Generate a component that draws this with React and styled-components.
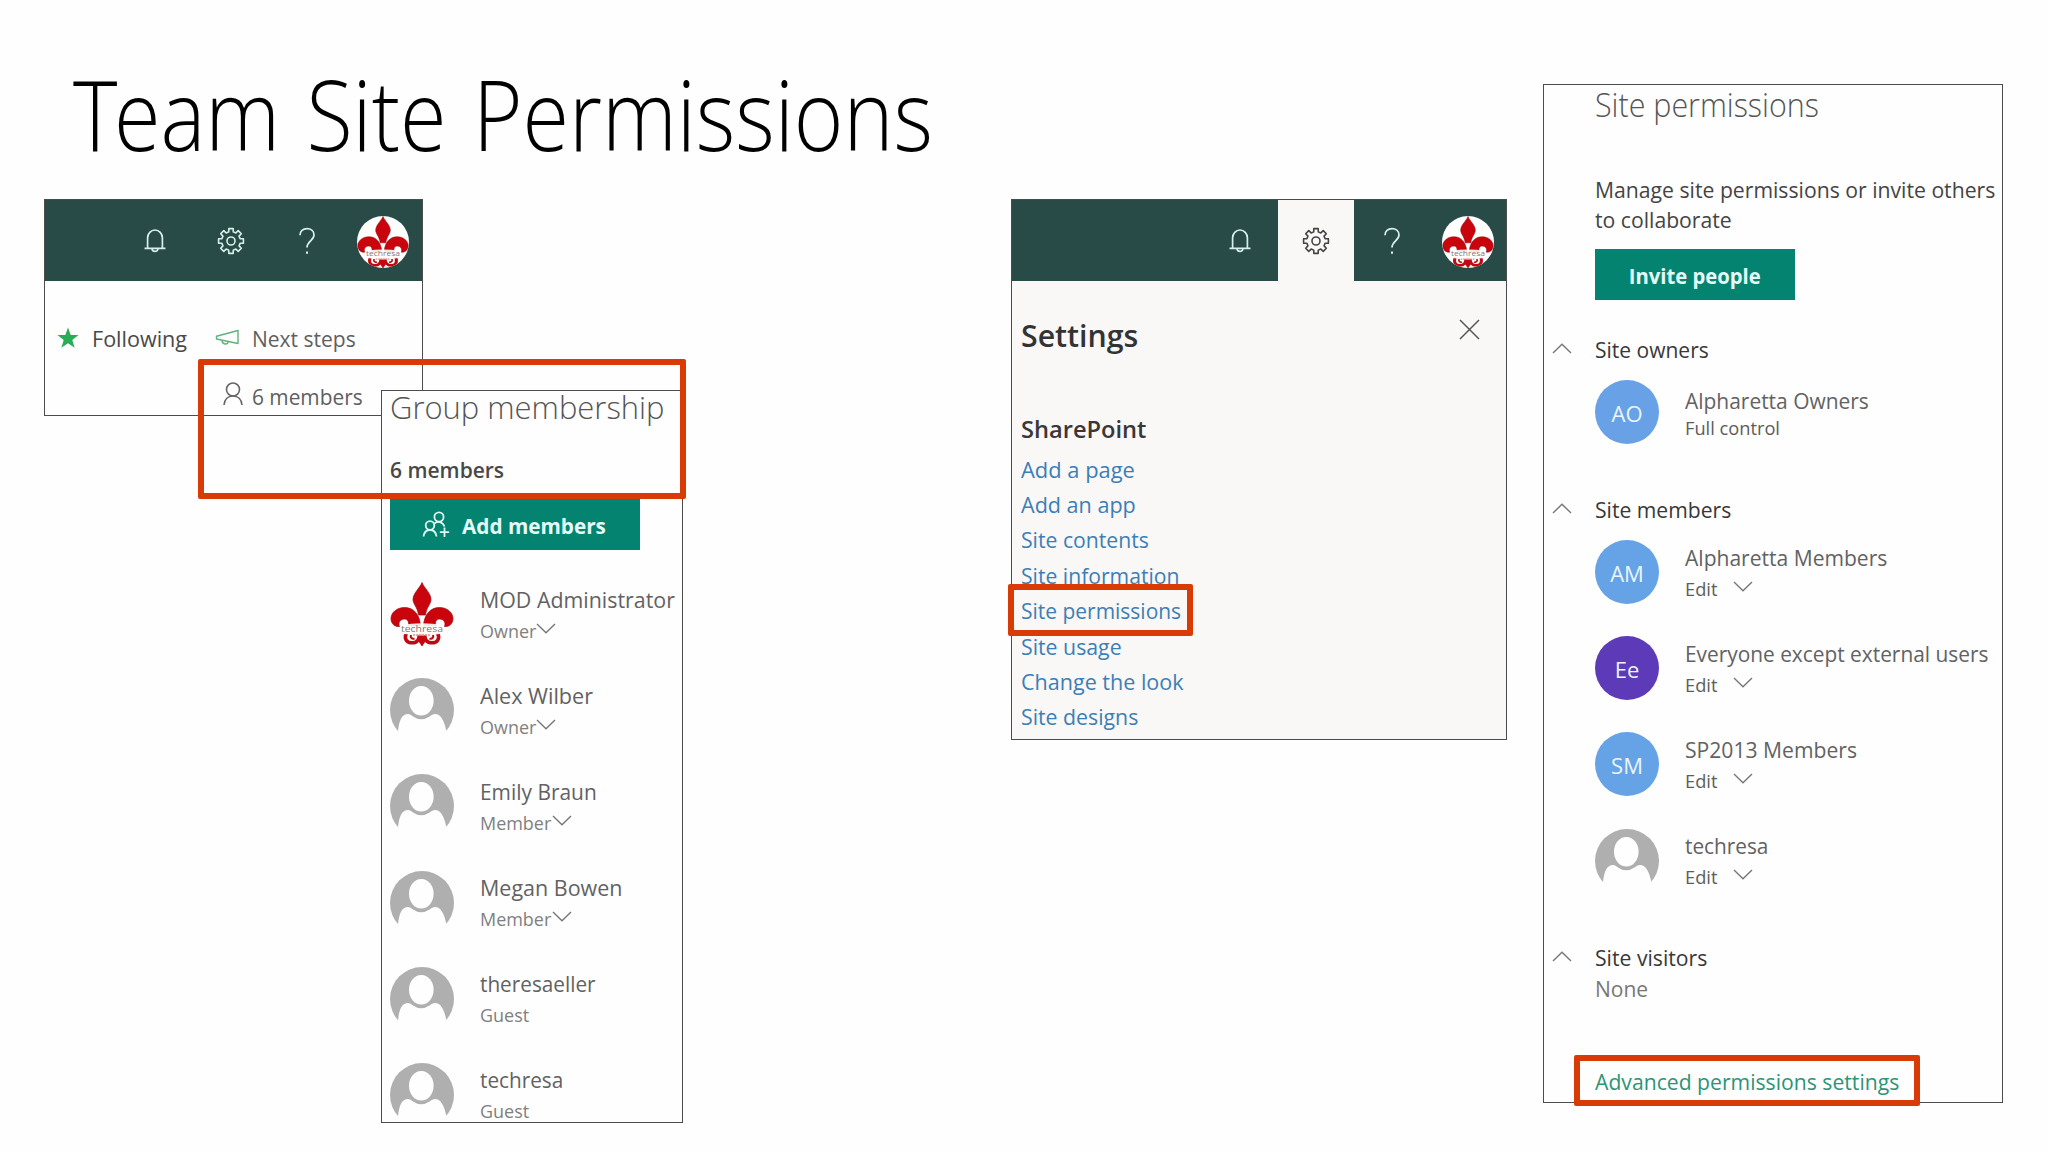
import React from 'react';
import styled, { createGlobalStyle } from 'styled-components';

const ownersGroup = [
  { initials: 'AO', color: '#69a1e6', name: 'Alpharetta Owners', fit: 0.952, role: 'Full control' },
];

const membersGroup = [
  { initials: 'AM', color: '#65a2e6', name: 'Alpharetta Members', fit: 0.957 },
  { initials: 'Ee', color: '#5c3ab8', name: 'Everyone except external users', fit: 0.948 },
  { initials: 'SM', color: '#65a2e6', name: 'SP2013 Members', fit: 0.96 },
  { name: 'techresa', fit: 0.945 },
];

const people = [
  { name: 'MOD Administrator', fit: 0.972, role: 'Owner', logo: true, menu: true },
  { name: 'Alex Wilber', fit: 0.98, role: 'Owner', menu: true },
  { name: 'Emily Braun', fit: 0.95, role: 'Member', menu: true },
  { name: 'Megan Bowen', fit: 0.977, role: 'Member', menu: true },
  { name: 'theresaeller', fit: 0.943, role: 'Guest' },
  { name: 'techresa', fit: 0.942, role: 'Guest' },
];

const links = [
  { text: 'Add a page', fit: 0.995 },
  { text: 'Add an app', fit: 0.98 },
  { text: 'Site contents', fit: 0.963 },
  { text: 'Site information', fit: 0.961 },
  { text: 'Site permissions', fit: 0.953 },
  { text: 'Site usage', fit: 0.967 },
  { text: 'Change the look', fit: 0.979 },
  { text: 'Site designs', fit: 0.967 },
];

function Bell() {
  return (
    <svg width="22" height="25" viewBox="0 0 22 25" fill="none" stroke="currentColor" strokeWidth="1.7">
      <path d="M3.6 20V10a7.4 8 0 0 1 14.8 0v10" />
      <path d="M0.5 20.4h21M8 20.6a3 2.8 0 0 0 6 0" />
    </svg>
  );
}

function Gear() {
  const points = [];
  for (let i = 0; i < 8; i++) {
    [[-14, 9.4], [-10, 12.6], [10, 12.6], [14, 9.4]].forEach(([deg, r]) => {
      const a = ((i * 45 + deg) * Math.PI) / 180;
      points.push(`${(14 + r * Math.sin(a)).toFixed(2)},${(14 - r * Math.cos(a)).toFixed(2)}`);
    });
  }
  return (
    <svg width="28" height="28" viewBox="0 0 28 28" fill="none" stroke="currentColor" strokeWidth="1.6" strokeLinejoin="round">
      <polygon points={points.join(' ')} />
      <circle cx="14" cy="14" r="4" />
    </svg>
  );
}

function Question() {
  return (
    <svg width="18" height="28" viewBox="0 0 18 28" fill="none" stroke="currentColor" strokeWidth="1.7">
      <path d="M2 8.2C2 4 5 1.6 9 1.6s7 2.4 7 6.4c0 5.4-7 6.6-7 12.4" />
      <path d="M9 24.4v2.4" strokeWidth="2" />
    </svg>
  );
}

function Fleur({ size = 64 }) {
  return (
    <svg width={size} height={size} viewBox="0 0 64 64">
      <g fill="#c9040c" stroke="#9d0a10" strokeWidth="0.7">
        <path d="M32 0.5C34 6 41 11 41 17.5C41 22 36.5 25 35.5 33H28.5C27.5 25 23 22 23 17.5C23 11 30 6 32 0.5Z" />
        <path d="M30.5 44C30 33 24 25.5 14.5 25.5C6.5 25.5 1 31 1 36.5C1 41.5 4.5 45 9.5 44.5C8 41 10 37 14.5 37C18 37 19 40 18.5 44Z" />
        <path d="M33.5 44C34 33 40 25.5 49.5 25.5C57.5 25.5 63 31 63 36.5C63 41.5 59.5 45 54.5 44.5C56 41 54 37 49.5 37C46 37 45 40 45.5 44Z" />
        <path d="M29 52H35L36 58L32 64L28 58Z" />
      </g>
      <g fill="none" stroke="#c00a12" strokeWidth="3.6">
        <path d="M16.5 51C13.5 57 17 60.8 22 60.8C27 60.8 30 57 29 52" />
        <path d="M47.5 51C50.5 57 47 60.8 42 60.8C37 60.8 34 57 35 52" />
        <path d="M21 52.5C20 55.5 22 57.5 24.5 56.5M43 52.5C44 55.5 42 57.5 39.5 56.5" strokeWidth="2" />
      </g>
      <path d="M11 43Q32 39.5 53 43V51.5Q32 55.5 11 51.5Z" fill="#fff" fillOpacity="0.9" />
      <text x="32" y="49.5" textAnchor="middle" textLength="42" lengthAdjust="spacingAndGlyphs" fontFamily="Open Sans, sans-serif" fontSize="9.5" fill="#8d7371">techresa</text>
      <path d="M23 53h18" stroke="#e88a8c" strokeWidth="1.6" strokeDasharray="2 1" />
    </svg>
  );
}

function Silhouette() {
  return (
    <svg width="64" height="54" viewBox="0 0 64 54">
      <circle cx="32" cy="32" r="32" fill="#b0afb0" />
      <ellipse cx="31.3" cy="22.7" rx="12.3" ry="14.8" fill="#fefefe" />
      <path d="M8 54C9 42 12 36 18 36C20 36 21 37 23 38.5Q31 44 39.5 38.5C41.5 37 43 36 45 36C51 36 54.5 43 56.5 54Z" fill="#fefefe" />
    </svg>
  );
}

function Chevron({ up }) {
  return (
    <svg width="20" height="11" viewBox="0 0 20 11" fill="none" stroke="#777" strokeWidth="1.4">
      <path d={up ? 'M1 10L10 1.2L19 10' : 'M1 1L10 9.8L19 1'} />
    </svg>
  );
}

function Star() {
  return (
    <svg width="22" height="22" viewBox="0 0 22 22">
      <path d="M11 0.5L13.7 8.1H21.5L15.3 12.9L17.6 20.8L11 16.2L4.4 20.8L6.7 12.9L0.5 8.1H8.3Z" fill="#27ae55" />
    </svg>
  );
}

function Megaphone() {
  return (
    <svg width="25" height="18" viewBox="0 0 25 18" fill="none" stroke="#5fb37e" strokeWidth="1.4" strokeLinejoin="round">
      <path d="M23 1.5V14.5L1.5 10V7.2L23 1.5Z" />
      <path d="M7 11.3C7 15.5 12.5 16.5 13.3 12.6" />
    </svg>
  );
}

function Person() {
  return (
    <svg width="20" height="24" viewBox="0 0 20 24" fill="none" stroke="#666" strokeWidth="1.6">
      <circle cx="10" cy="7.5" r="6.5" />
      <path d="M1 23C1.5 17.5 5 14 10 14S18.5 17.5 19 23" />
    </svg>
  );
}

function AddPeople() {
  return (
    <svg width="28" height="27" viewBox="0 0 28 27" fill="none" stroke="#dffaf4" strokeWidth="1.8">
      <circle cx="17" cy="6" r="4.6" />
      <circle cx="8" cy="14.5" r="4.3" />
      <path d="M1.5 25.5C2 21.5 4.5 19 8 19S14 21.5 14.5 25.5" />
      <path d="M12.5 12.5C15.500 9.8 20.5 10.3 22.5 15.5" />
      <path d="M22.5 16.5V26M17.8 21.2H27.2" />
    </svg>
  );
}

function Close() {
  return (
    <svg width="21" height="21" viewBox="0 0 21 21" stroke="#555" strokeWidth="1.5">
      <path d="M1 1L20 20M20 1L1 20" />
    </svg>
  );
}

function Suite({ active }) {
  return (
    <SuiteBar $inset={active ? 0 : 1}>
      <Slot><Bell /></Slot>
      <Slot $active={active}><Gear /></Slot>
      <Slot><Question /></Slot>
      <Slot><Account><Fleur size={52} /></Account></Slot>
    </SuiteBar>
  );
}

function Group({ item }) {
  return (
    <Entry>
      {item.initials ? <Circle $color={item.color}>{item.initials}</Circle> : <Silhouette />}
      <EntryText $top={item.role ? 4.5 : 1.5}>
        <Name $fit={item.fit}>{item.name}</Name>
        {item.role
          ? <Role $fit={0.96} $dark>{item.role}</Role>
          : <RoleLine $gap={15}><Role $fit={0.96} $dark>Edit</Role><Chevron /></RoleLine>}
      </EntryText>
    </Entry>
  );
}

function App() {
  return (
    <>
      <GlobalStyle />
      <Slide>
        <Column $left={44} $width={967}>
          <Title><TitleInitial>T</TitleInitial>eam Site Permissions</Title>
          <SitePanel>
            <Suite />
            <Actions>
              <Star />
              <Label $fit={0.98} $color="#484848">Following</Label>
              <Megaphone />
              <Label $fit={0.955}>Next steps</Label>
              <MemberIcon><Person /></MemberIcon>
              <Label $fit={0.948}>6 members</Label>
            </Actions>
          </SitePanel>
          <GroupPanel>
            <Heading $fit={0.967}>Group membership</Heading>
            <Count>6 members</Count>
            <AddButton><AddPeople /><ButtonText $fit={0.942}>Add members</ButtonText></AddButton>
            <People>
              {people.map((p) => (
                <Entry key={p.name}>
                  {p.logo ? <Fleur /> : <Silhouette />}
                  <EntryText $top={1.5}>
                    <Name $fit={p.fit}>{p.name}</Name>
                    <RoleLine $gap={-3}><Role $fit={0.945}>{p.role}</Role>{p.menu && <Chevron />}</RoleLine>
                  </EntryText>
                </Entry>
              ))}
            </People>
          </GroupPanel>
        </Column>

        <Column $width={532}>
          <SettingsPanel>
            <Suite active />
            <SettingsBody>
              <SettingsTop><SettingsTitle>Settings</SettingsTitle><Close /></SettingsTop>
              <SettingsSub>SharePoint</SettingsSub>
              {links.map((l) => <SettingsLink key={l.text} $fit={l.fit}>{l.text}</SettingsLink>)}
            </SettingsBody>
          </SettingsPanel>
        </Column>

        <Column $width={461}>
          <PermissionsPanel>
            <Indent>
              <Heading $size={33} $line={40} $fit={0.922}>Site permissions</Heading>
              <Intro>Manage site permissions or invite others<br />to collaborate</Intro>
              <InviteButton><ButtonText $fit={0.92} $center>Invite people</ButtonText></InviteButton>
            </Indent>
            <Section $top={34}><Chevron up /><Label $fit={0.955} $color="#383838">Site owners</Label></Section>
            <Groups>{ownersGroup.map((g) => <Group key={g.name} item={g} />)}</Groups>
            <Section $top={50}><Chevron up /><Label $fit={0.96} $color="#383838">Site members</Label></Section>
            <Groups>{membersGroup.map((g) => <Group key={g.name} item={g} />)}</Groups>
            <Section $top={49.2}><Chevron up /><Label $fit={0.963} $color="#383838">Site visitors</Label></Section>
            <Indent>
              <NoneLabel $fit={0.955} $color="#777">None</NoneLabel>
              <Advanced $fit={0.962} $color="#2c9478">Advanced permissions settings</Advanced>
            </Indent>
          </PermissionsPanel>
        </Column>

        <Highlight $x={198} $y={359} $w={488} $h={140} />
        <Highlight $x={1008} $y={584} $w={185} $h={52} />
        <Highlight $x={1574} $y={1055} $w={346} $h={51} />
      </Slide>
    </>
  );
}

export default App;

const GlobalStyle = createGlobalStyle`
  body {
    margin: 0;
    background: #fefefe;
    font-family: "Open Sans", "Noto Sans", sans-serif;
  }
  * {
    box-sizing: border-box;
  }
  svg {
    display: block;
    flex-shrink: 0;
  }
`;

const Slide = styled.div`
  width: 2048px;
  height: 1152px;
  position: relative;
  display: flex;
  overflow: hidden;
`;

const Column = styled.div`
  width: ${({ $width }) => $width}px;
  margin-left: ${({ $left }) => $left || 0}px;
  flex-shrink: 0;
`;

/* $fit narrows the glyphs a little, the installed face runs wide */
const Label = styled.div`
  width: max-content;
  font-size: 22px;
  line-height: 30px;
  white-space: nowrap;
  color: ${({ $color }) => $color || '#5f5f5f'};
  transform: scaleX(${({ $fit }) => $fit || 1});
  transform-origin: left center;
`;

const Title = styled.h1`
  width: max-content;
  height: 199px;
  margin: 0;
  padding: 47px 0 0 29px;
  font-weight: 300;
  font-size: 98px;
  line-height: 132px;
  word-spacing: 5px;
  white-space: nowrap;
  color: #000;
  transform: scaleX(0.864);
  transform-origin: 29px center;
`;

const TitleInitial = styled.span`
  letter-spacing: -4px;
`;

const Panel = styled.div`
  border: 1px solid #4c4c4c;
  background: #fefefe;
`;

const SitePanel = styled(Panel)`
  width: 379px;
  height: 217px;
`;

const GroupPanel = styled(Panel)`
  position: relative;
  width: 302px;
  height: 733px;
  margin: -26px 0 0 337px;
  padding-left: 8px;
`;

const SettingsPanel = styled(Panel)`
  width: 496px;
  height: 541px;
  margin-top: 199px;
`;

const PermissionsPanel = styled(Panel)`
  width: 460px;
  height: 1019px;
  margin-top: 84px;
`;

const SuiteBar = styled.div`
  height: 81px;
  display: flex;
  justify-content: flex-end;
  padding-right: ${({ $inset }) => $inset}px;
  background: #284b47;
`;

const Slot = styled.div`
  width: 76px;
  height: 81px;
  display: flex;
  align-items: center;
  justify-content: center;
  color: ${({ $active }) => ($active ? '#444' : '#d6efea')};
  background: ${({ $active }) => ($active ? '#faf7f7' : 'transparent')};
`;

const Account = styled.div`
  width: 52px;
  height: 52px;
  margin-top: 3px;
  border-radius: 50%;
  background: #fff;
  overflow: hidden;
`;

const Actions = styled.div`
  display: grid;
  grid-template-columns: 35px 123px 37px auto;
  grid-auto-rows: 30px;
  row-gap: 28px;
  align-items: center;
  padding: 41.5px 0 0 12px;
`;

const MemberIcon = styled.div`
  grid-column: 3;
  padding: 0 0 4px 8px;
`;

const Heading = styled(Label)`
  font-weight: 300;
  font-size: ${({ $size }) => $size || 32}px;
  line-height: ${({ $line }) => $line || 32}px;
  color: #555;
`;

const Count = styled(Label)`
  margin-top: 32px;
  font-weight: 600;
  font-size: 21px;
  color: #484848;
`;

const AddButton = styled.div`
  width: 250px;
  height: 51px;
  margin-top: 14px;
  padding-left: 32px;
  display: flex;
  align-items: center;
  gap: 12px;
  background: #038370;
`;

const InviteButton = styled(AddButton)`
  width: 200px;
  margin-top: 15px;
  padding: 0;
  justify-content: center;
`;

const ButtonText = styled(Label)`
  font-weight: 700;
  color: #e6fbf8;
  transform-origin: ${({ $center }) => ($center ? 'center' : 'left center')};
`;

const People = styled.div`
  display: flex;
  flex-direction: column;
  gap: 32.2px;
  margin-top: 32px;
`;

const Entry = styled.div`
  height: 64px;
  display: flex;
  gap: 25.5px;
`;

const EntryText = styled.div`
  padding-top: ${({ $top }) => $top}px;
`;

const Name = styled(Label)`
  color: #626262;
`;

const RoleLine = styled.div`
  display: flex;
  margin-top: 4px;

  svg {
    margin-top: 5px;
    margin-left: ${({ $gap }) => $gap}px;
  }
`;

const Role = styled(Label)`
  font-size: 19px;
  line-height: 26px;
  color: ${({ $dark }) => ($dark ? '#5c5c5c' : '#808080')};
`;

const Circle = styled.div`
  width: 64px;
  height: 64px;
  flex-shrink: 0;
  display: flex;
  align-items: center;
  justify-content: center;
  border-radius: 50%;
  background: ${({ $color }) => $color};
  color: #eaf6ff;
  font-size: 22px;
  padding-top: 1px;
`;

const SettingsBody = styled.div`
  height: 458px;
  padding: 35px 26px 0 9px;
  background: #faf7f7;
`;

const SettingsTop = styled.div`
  display: flex;
  justify-content: space-between;

  svg {
    margin-top: 3px;
  }
`;

const SettingsTitle = styled(Label)`
  font-weight: 600;
  font-size: 30px;
  line-height: 40px;
  color: #333;
  transform: scaleX(1.01);
`;

const SettingsSub = styled(Label)`
  margin: 56px 0 5.5px;
  font-weight: 600;
  font-size: 24px;
  line-height: 34px;
  color: #383838;
  transform: scaleX(0.985);
`;

const SettingsLink = styled(Label)`
  line-height: 35.4px;
  color: #3b7fb6;
`;

const Indent = styled.div`
  padding-left: 51px;
`;

const Intro = styled(Label)`
  margin-top: 49px;
  color: #444;
  transform: scaleX(0.963);
`;

const Section = styled.div`
  display: flex;
  gap: 23px;
  margin-top: ${({ $top }) => $top}px;
  padding-left: 8px;

  svg {
    margin-top: 9px;
  }
`;

const Groups = styled.div`
  display: flex;
  flex-direction: column;
  gap: 32.2px;
  margin-top: 16px;
  padding-left: 51px;
`;

const NoneLabel = styled(Label)`
  margin-top: 1px;
`;

const Advanced = styled(Label)`
  margin-top: 63.5px;
`;

const Highlight = styled.div`
  position: absolute;
  left: ${({ $x }) => $x}px;
  top: ${({ $y }) => $y}px;
  width: ${({ $w }) => $w}px;
  height: ${({ $h }) => $h}px;
  border: 6px solid #d83b06;
  border-radius: 2px;
`;
